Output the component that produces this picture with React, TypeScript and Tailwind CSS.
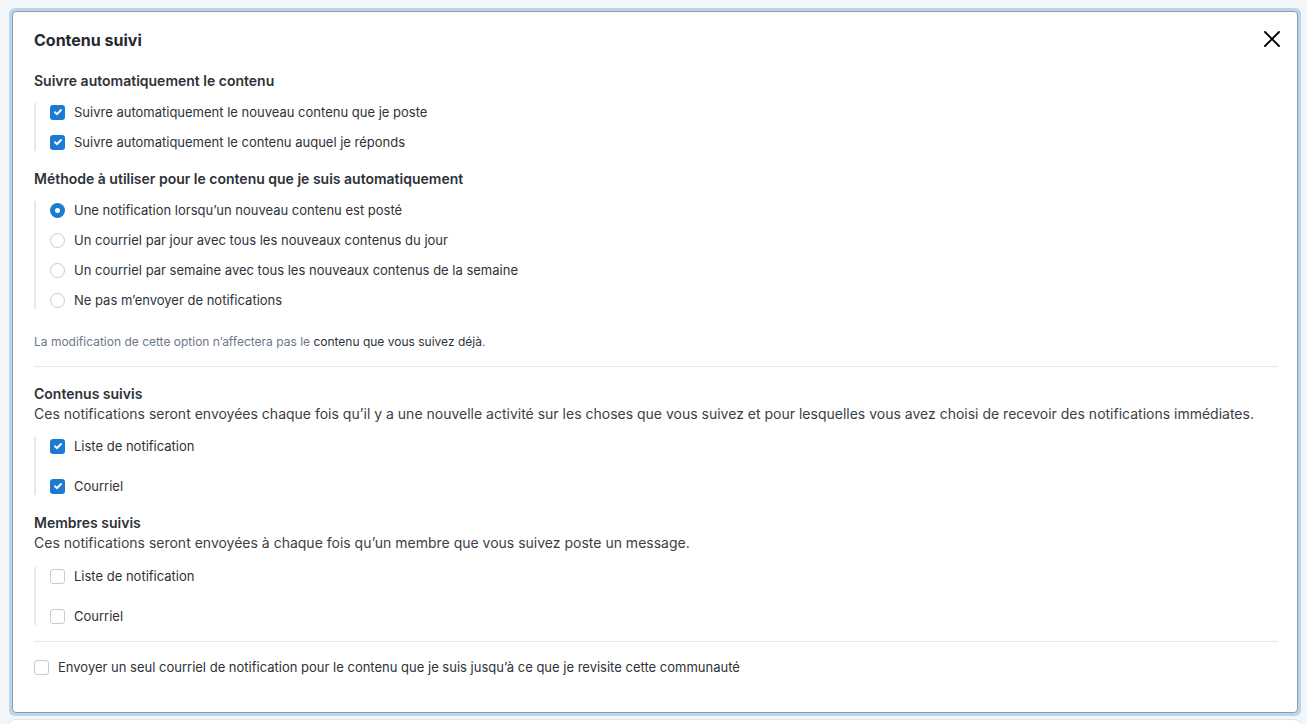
import { X } from "lucide-react";

type Opt = { label: string; checked?: boolean };

const Checkbox = ({ checked, label }: Opt) => (
    <label className="flex flex-row items-center gap-[9px] cursor-pointer leading-[18px]">
        {checked ? (
            <span className="size-[15px] rounded-[3px] bg-[#1c7bd0] flex items-center justify-center">
                <svg viewBox="0 0 12 12" className="size-[10px]" fill="none">
                    <path d="M2.4 6.4 4.9 8.6 9.6 3.6" stroke="white" strokeWidth="2.3" strokeLinecap="round" strokeLinejoin="round" />
                </svg>
            </span>
        ) : (
            <span className="size-[15px] rounded-[3px] border border-[#c7ccd3] bg-white"></span>
        )}
        <span className="text-[13px] text-[#2e3238]">{label}</span>
    </label>
);

const Radio = ({ checked, label }: Opt) => (
    <label className="flex flex-row items-center gap-[9px] cursor-pointer leading-[18px]">
        {checked ? (
            <span className="size-[15px] rounded-full bg-[#1c7bd0] flex items-center justify-center">
                <span className="size-[5px] rounded-full bg-white"></span>
            </span>
        ) : (
            <span className="size-[15px] rounded-full border border-[#c7ccd3] bg-white"></span>
        )}
        <span className="text-[13px] text-[#2e3238]">{label}</span>
    </label>
);

const Group = ({ children, wide }: { children: React.ReactNode; wide?: boolean }) => (
    <div className={`border-l-2 border-[#e6e9ed] pl-[14px] flex flex-col ${wide ? "gap-[22px]" : "gap-[12px]"}`}>
        {children}
    </div>
);

export default function App() {
    return (
        <div className="min-h-[724px] w-full bg-[#f3f6f9] pt-[8px] pl-[9px] pr-[6px] font-['Inter',sans-serif]">
            <div className="rounded-[6px] bg-[#bcd4ea] p-[3px]">
                <div className="rounded-[4px] border border-[#8d9bab] bg-white pl-[21px] pr-[19px] pt-[17px] pb-[36px] text-[#2e3238]">
                    <div className="flex flex-row items-center justify-between h-[22px]">
                        <h2 className="text-[16px] font-bold text-[#25292f]">Contenu suivi</h2>
                        <X className="size-[28px] text-black -mr-[8px] mb-[2px]" strokeWidth={1.6} />
                    </div>

                    <h3 className="mt-[20px] text-[14px] font-semibold leading-[20px]">Suivre automatiquement le contenu</h3>
                    <div className="mt-[12px]">
                        <Group>
                            <Checkbox checked label="Suivre automatiquement le nouveau contenu que je poste" />
                            <Checkbox checked label="Suivre automatiquement le contenu auquel je réponds" />
                        </Group>
                    </div>

                    <h3 className="mt-[18px] text-[14px] font-semibold leading-[20px]">
                        Méthode à utiliser pour le contenu que je suis automatiquement
                    </h3>
                    <div className="mt-[12px]">
                        <Group>
                            <Radio checked label="Une notification lorsqu’un nouveau contenu est posté" />
                            <Radio label="Un courriel par jour avec tous les nouveaux contenus du jour" />
                            <Radio label="Un courriel par semaine avec tous les nouveaux contenus de la semaine" />
                            <Radio label="Ne pas m’envoyer de notifications" />
                        </Group>
                    </div>

                    <p className="mt-[25px] text-[12px] text-[#6b7788] leading-[16px]">
                        La modification de cette option n’affectera pas le{" "}
                        <span className="text-[#2e3238]">contenu que vous suivez déjà</span>.
                    </p>

                    <div className="mt-[16px] border-t border-[#e6e9ed]"></div>

                    <h3 className="mt-[17px] text-[14px] font-semibold leading-[20px]">Contenus suivis</h3>
                    <p className="text-[14px] leading-[20px] text-[#3a3f46]">
                        Ces notifications seront envoyées chaque fois qu’il y a une nouvelle activité sur les choses que vous suivez et pour lesquelles vous avez choisi de recevoir des notifications immédiates.
                    </p>
                    <div className="mt-[13px]">
                        <Group wide>
                            <Checkbox checked label="Liste de notification" />
                            <Checkbox checked label="Courriel" />
                        </Group>
                    </div>

                    <h3 className="mt-[18px] text-[14px] font-semibold leading-[20px]">Membres suivis</h3>
                    <p className="text-[14px] leading-[20px] text-[#3a3f46]">
                        Ces notifications seront envoyées à chaque fois qu’un membre que vous suivez poste un message.
                    </p>
                    <div className="mt-[14px]">
                        <Group wide>
                            <Checkbox label="Liste de notification" />
                            <Checkbox label="Courriel" />
                        </Group>
                    </div>

                    <div className="mt-[16px] border-t border-[#e6e9ed]"></div>

                    <div className="mt-[16px]">
                        <Checkbox label="Envoyer un seul courriel de notification pour le contenu que je suis jusqu’à ce que je revisite cette communauté" />
                    </div>
                </div>
            </div>
            <div className="mt-[3px] h-[6px] rounded-t-[6px] border border-b-0 border-[#dfe6ee] bg-white"></div>
        </div>
    );
}
